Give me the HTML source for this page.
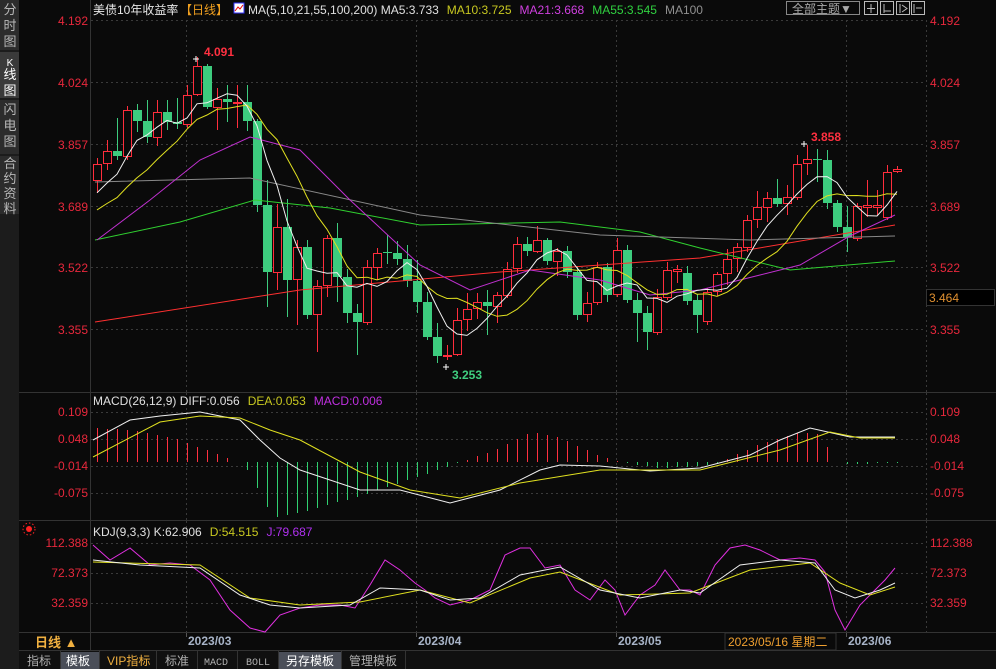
<!DOCTYPE html>
<html><head><meta charset="utf-8"><style>
body{margin:0;width:996px;height:669px;background:#0a0a0a;overflow:hidden;font-family:"Liberation Sans","Noto Sans CJK SC",sans-serif;}
svg{position:absolute;left:0;top:0}
</style></head><body>
<svg id="s" width="996" height="669" xmlns="http://www.w3.org/2000/svg" font-family="Liberation Sans, Noto Sans CJK SC, sans-serif">
<rect width="996" height="669" fill="#0a0a0a"/>
<rect x="0" y="0" width="19" height="669" fill="#1c1c1c"/>
<rect x="0" y="0" width="19" height="50" fill="#2c2c2c"/>
<rect x="0" y="52" width="19" height="46" fill="#3a3a3a"/>
<rect x="0" y="100" width="19" height="54" fill="#2c2c2c"/>
<rect x="0" y="156" width="19" height="58" fill="#2c2c2c"/>
<g fill="#b8b8b8" font-size="13" text-anchor="middle">
<text x="10" y="14">分</text><text x="10" y="30">时</text><text x="10" y="46">图</text>
<text x="10" y="66" font-size="10" fill="#fff">K</text><text x="10" y="79" fill="#fff">线</text><text x="10" y="95" fill="#fff">图</text>
<text x="10" y="114">闪</text><text x="10" y="130">电</text><text x="10" y="146">图</text>
<text x="10" y="168">合</text><text x="10" y="183">约</text><text x="10" y="198">资</text><text x="10" y="213">料</text>
</g>
<g stroke="#333" stroke-width="1">
<line x1="90.5" y1="0" x2="90.5" y2="650"/>
<line x1="19" y1="392.5" x2="996" y2="392.5"/>
<line x1="19" y1="520.5" x2="996" y2="520.5"/>
<line x1="19" y1="632.5" x2="996" y2="632.5"/>
<line x1="19" y1="650.5" x2="996" y2="650.5"/>
</g>
<g stroke="#3a3a3a" stroke-dasharray="2,3" stroke-width="1" id="grid"></g>
<g id="chart"></g>
<text x="93" y="14" font-size="12" fill="#e8e8e8">美债10年收益率</text>
<text x="180" y="14" font-size="12" fill="#f0a020">【日线】</text>
<rect x="234" y="3" width="10" height="10" fill="#fff" stroke="#33f"/>
<polyline points="235,11 238,7 240,9 243,5" stroke="#e00" fill="none"/>
<text x="248" y="14" font-size="12"><tspan fill="#e0e0e0">MA(5,10,21,55,100,200)  MA5:3.733</tspan><tspan fill="#c8c820" dx="8">MA10:3.725</tspan><tspan fill="#d040e0" dx="8">MA21:3.668</tspan><tspan fill="#30d040" dx="8">MA55:3.545</tspan><tspan fill="#909090" dx="8">MA100</tspan></text>
<rect x="786.5" y="1.5" width="73" height="13" fill="none" stroke="#888"/>
<text x="792" y="13" font-size="12" fill="#aaa">全部主题▼</text>
<g stroke="#bbb" fill="none"><rect x="864.5" y="1.5" width="13" height="13"/><rect x="880.5" y="1.5" width="13" height="13"/><rect x="896.5" y="1.5" width="13" height="13"/><rect x="911.5" y="1.5" width="13" height="13"/>
<path d="M871 4v9M867 8.5h8M884 4v9M884 11h7M900 4v9M902 5l5 3.5-5 3.5M914 4v9M916 8h6"/></g>
<g font-size="12" fill="#e8283c">
<text x="88" y="25" text-anchor="end">4.192</text><text x="88" y="87" text-anchor="end">4.024</text><text x="88" y="149" text-anchor="end">3.857</text><text x="88" y="211" text-anchor="end">3.689</text><text x="88" y="272" text-anchor="end">3.522</text><text x="88" y="334" text-anchor="end">3.355</text>
<text x="930" y="25">4.192</text><text x="930" y="87">4.024</text><text x="930" y="149">3.857</text><text x="930" y="211">3.689</text><text x="930" y="272">3.522</text><text x="930" y="334">3.355</text>
<text x="88" y="416" text-anchor="end">0.109</text><text x="88" y="443" text-anchor="end">0.048</text><text x="88" y="470" text-anchor="end">-0.014</text><text x="88" y="497" text-anchor="end">-0.075</text>
<text x="930" y="416">0.109</text><text x="930" y="443">0.048</text><text x="930" y="470">-0.014</text><text x="930" y="497">-0.075</text>
<text x="88" y="547" text-anchor="end">112.388</text><text x="88" y="577" text-anchor="end">72.373</text><text x="88" y="607" text-anchor="end">32.359</text>
<text x="930" y="547">112.388</text><text x="930" y="577">72.373</text><text x="930" y="607">32.359</text>
</g>
<rect x="926.5" y="289.5" width="68" height="16" fill="#000" stroke="#333"/>
<text x="929" y="302" font-size="12" fill="#e09030">3.464</text>
<text x="204" y="56" font-size="12" font-weight="bold" fill="#ff3040">4.091</text>
<text x="811" y="141" font-size="12" font-weight="bold" fill="#ff3040">3.858</text>
<text x="452" y="379" font-size="12" font-weight="bold" fill="#40d080">3.253</text>
<text x="93" y="405" font-size="12"><tspan fill="#e0e0e0">MACD(26,12,9) DIFF:0.056</tspan><tspan fill="#c8c820" dx="8">DEA:0.053</tspan><tspan fill="#c030e0" dx="8">MACD:0.006</tspan></text>
<text x="93" y="536" font-size="12"><tspan fill="#e0e0e0">KDJ(9,3,3) K:62.906</tspan><tspan fill="#c8c820" dx="8">D:54.515</tspan><tspan fill="#b030f0" dx="8">J:79.687</tspan></text>
<circle cx="29" cy="529" r="3" fill="#f22"/><circle cx="29" cy="529" r="6" fill="none" stroke="#f22" stroke-dasharray="1.5,2"/>
<text x="35" y="647" font-size="13" font-weight="bold" fill="#f0b040">日线 ▲</text>
<g font-size="12" font-weight="bold" fill="#a8b4c8"><text x="188" y="645">2023/03</text><text x="418" y="645">2023/04</text><text x="618" y="645">2023/05</text><text x="848" y="645">2023/06</text></g>
<g stroke="#555"><line x1="186.5" y1="633" x2="186.5" y2="637"/><line x1="416.5" y1="633" x2="416.5" y2="637"/><line x1="616.5" y1="633" x2="616.5" y2="637"/><line x1="846.5" y1="633" x2="846.5" y2="637"/></g>
<rect x="725" y="633" width="111" height="17" fill="#0a0a0a" stroke="#333"/>
<text x="728" y="646" font-size="12" fill="#f0a030">2023/05/16 星期二</text>
<rect x="19" y="651" width="977" height="18" fill="#101010"/>
<rect x="60" y="652" width="39" height="17" fill="#4a4e58"/>
<rect x="278" y="652" width="63" height="17" fill="#4a4e58"/>
<g stroke="#333"><line x1="60.5" y1="651" x2="60.5" y2="669"/><line x1="99.5" y1="651" x2="99.5" y2="669"/><line x1="156.5" y1="651" x2="156.5" y2="669"/><line x1="197.5" y1="651" x2="197.5" y2="669"/><line x1="237.5" y1="651" x2="237.5" y2="669"/><line x1="278.5" y1="651" x2="278.5" y2="669"/><line x1="341.5" y1="651" x2="341.5" y2="669"/><line x1="405.5" y1="651" x2="405.5" y2="669"/></g>
<g font-size="12" fill="#b0b0b0"><text x="27" y="665">指标</text><text x="66" y="665" fill="#fff">模板</text><text x="107" y="665" fill="#f0b040">VIP指标</text><text x="165" y="665">标准</text><text x="204" y="665" font-size="10" font-family="Liberation Mono">MACD</text><text x="246" y="665" font-size="10" font-family="Liberation Mono">BOLL</text><text x="286" y="665" fill="#fff">另存模板</text><text x="349" y="665">管理模板</text></g>
</svg>
<script>
const NS="http://www.w3.org/2000/svg",ch=document.getElementById('chart'),gr=document.getElementById('grid');
function el(t,a,p){const e=document.createElementNS(NS,t);for(const k in a)e.setAttribute(k,a[k]);(p||ch).appendChild(e);return e;}
[20,82,144,206,267,329,412,439,466,493,543,573,603].forEach(y=>el('line',{x1:91,x2:925,y1:y+.5,y2:y+.5},gr));
[186,416,616,846,926].forEach(x=>{el('line',{x1:x+.5,x2:x+.5,y1:20,y2:392},gr);el('line',{x1:x+.5,x2:x+.5,y1:393,y2:520},gr);el('line',{x1:x+.5,x2:x+.5,y1:521,y2:632},gr);});
const D=[
[164,180,158,193,1],[151,163,140,170,1],[151,156,118,160,0],[110,156,106,160,1],[110,121,104,132,0],[121,137,100,143,0],[112,137,100,146,1],[112,122,100,130,0],[122,124,98,129,0],[95,124,85,128,1],
[66,94,57,96,1],[66,107,64,109,0],[99,107,88,130,1],[99,102,85,122,0],[102,103,85,128,1],[102,121,85,131,0],[121,205,119,212,0],[205,272,180,307,0],[227,272,204,290,1],[227,280,199,317,0],
[247,279,240,325,1],[247,315,240,319,0],[286,314,280,352,1],[238,285,235,297,1],[238,277,223,302,0],[277,313,269,323,0],[313,322,304,355,0],[267,322,260,325,1],[253,267,248,280,1],[252,253,235,264,0],
[253,259,241,265,0],[259,281,245,287,0],[281,302,260,313,0],[302,337,292,340,0],[337,356,323,363,0],[355,356,345,360,1],[320,354,308,356,1],[309,319,293,331,1],[302,308,293,319,1],[302,306,290,335,0],
[295,306,292,323,1],[269,295,262,298,1],[244,268,237,273,1],[244,251,237,256,0],[240,251,226,253,1],[240,261,238,265,0],[251,261,248,276,1],[251,272,246,278,0],[272,315,266,320,0],[303,314,292,322,1],
[267,302,262,305,1],[267,295,263,302,0],[250,294,238,297,1],[250,300,245,303,0],[300,313,293,342,0],[313,332,306,350,0],[297,332,289,335,1],[270,297,262,300,1],[269,271,265,283,1],[273,301,266,305,0],
[300,315,294,333,0],[292,321,288,325,1],[274,291,272,296,1],[259,273,249,285,1],[247,258,243,272,1],[220,247,215,252,1],[207,219,191,228,1],[198,207,192,222,1],[198,204,179,207,0],[197,203,185,215,1],
[164,197,155,200,1],[159,163,145,175,1],[159,160,149,182,0],[160,203,150,209,0],[203,227,200,232,0],[227,237,206,252,0],[206,238,203,241,1],[205,207,180,217,1],[205,207,190,215,1],[172,217,165,220,1],
[169,171,166,173,1]];
const X=D.map((_,i)=>97+i*10);
D.forEach((d,i)=>{const [t,b,h,l,u]=d,x=X[i],col=u?'#ff2d3c':'#3dcc7e';
el('line',{x1:x+.5,x2:x+.5,y1:h,y2:l,stroke:col});
if(u)el('rect',{x:x-3.5,y:t+.5,width:8,height:Math.max(1,b-t),fill:'#0a0a0a',stroke:col});else el('rect',{x:x-4,y:t,width:9,height:Math.max(1,b-t),fill:col});});
const C=D.map(d=>d[4]?d[0]:d[1]);
function ma(n,pad){return C.map((_,i)=>{let s=0;for(let k=0;k<n;k++){const j=i-k;s+=j>=0?C[j]:pad;}return s/n;});}
function pl(pts,col){el('polyline',{points:pts.map(p=>p.join(',')).join(' '),fill:'none',stroke:col,'stroke-width':1});}
pl([[95,322],[300,290],[500,272],[700,258],[895,225]],'#ff3030');
pl([[95,240],[180,222],[255,200],[330,208],[420,225],[560,222],[640,232],[700,248],[790,270],[895,261]],'#30d030');
pl([[95,182],[250,178],[420,215],[600,235],[750,240],[895,236]],'#888');
pl([[97,240],[150,200],[200,160],[250,137],[300,150],[350,200],[420,265],[470,290],[530,270],[600,280],[650,295],[700,290],[760,275],[800,265],[850,236],[895,215]],'#c030d0');
pl(ma(10,215).map((v,i)=>[X[i],v]),'#e0e020');
pl(ma(5,200).map((v,i)=>[X[i],v]),'#f0f0f0');
el('path',{d:'M196 56v6M193 59h6M804 141v6M801 144h6M446 364v6M443 367h6',stroke:'#fff'});
const z=462;
function hv(x){const P=[[97,-34],[130,-32],[180,-22],[237,0],[247,8],[273,56],[310,48],[360,34],[420,14],[460,0],[500,-14],[530,-30],[560,-24],[600,-6],[620,0],[660,6],[700,4],[720,0],[760,-18],[800,-30],[820,-28],[835,0],[850,2],[897,1]];for(let i=0;i<P.length-1;i++)if(x<=P[i+1][0]){const t=(x-P[i][0])/(P[i+1][0]-P[i][0]);return P[i][1]+t*(P[i+1][1]-P[i][1]);}return 0;}
X.forEach(x=>{const v=Math.round(hv(x));if(Math.abs(v)<1)return;el('rect',{x:x,y:Math.min(z,z+v),width:1,height:Math.abs(v),fill:v<0?'#ff3040':'#30d070','shape-rendering':'crispEdges'});});
pl([[93,440],[130,420],[160,416],[200,412],[240,420],[260,440],[280,458],[300,470],[330,480],[360,490],[400,490],[450,503],[500,490],[540,470],[560,465],[600,466],[650,471],[700,468],[750,455],[780,440],[810,428],[850,437],[895,437]],'#f0f0f0');
pl([[93,457],[160,422],[200,416],[240,418],[270,430],[300,440],[360,472],[410,490],[460,498],[520,483],[600,470],[700,470],[780,450],[830,432],[860,438],[895,438]],'#e0e020');
pl([[93,545],[110,560],[130,548],[150,565],[170,563],[190,565],[210,580],[230,610],[250,628],[265,632],[280,615],[300,608],[320,605],[340,605],[355,608],[370,585],[385,560],[400,570],[415,583],[425,590],[435,598],[450,605],[470,600],[490,590],[505,555],[520,548],[530,548],[545,568],[560,565],[575,590],[590,600],[605,580],[615,590],[625,615],[640,595],[655,585],[665,570],[680,590],[690,590],[700,595],[715,565],[730,548],[745,545],[760,550],[780,560],[800,558],[815,560],[825,572],[835,610],[845,630],[860,605],[875,590],[885,580],[895,568]],'#e030e0');
pl([[93,562],[200,565],[250,598],[300,605],[360,602],[420,590],[470,603],[530,578],[560,572],[620,595],[690,593],[750,570],[810,563],[840,583],[870,595],[895,587]],'#e0e020');
pl([[93,560],[140,565],[200,568],[240,595],[270,605],[300,608],[350,605],[380,588],[420,590],[450,600],[480,598],[520,575],[560,567],[600,590],[640,598],[680,590],[700,593],[740,565],[780,560],[815,563],[835,590],[855,598],[880,590],[895,583]],'#f0f0f0');
</script>
</body></html>
